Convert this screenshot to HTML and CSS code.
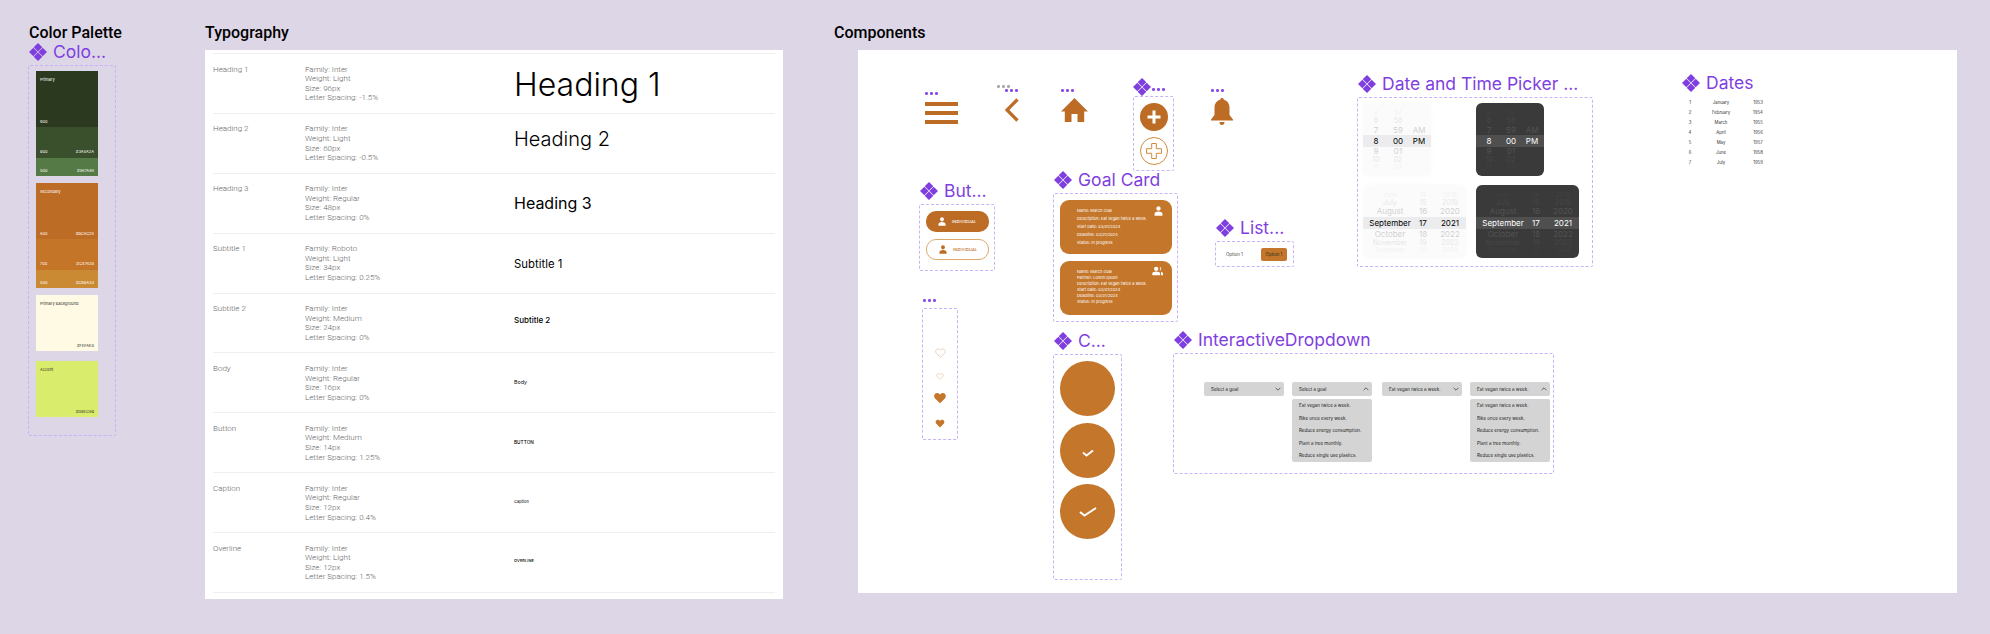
FILE: index.html
```html
<!DOCTYPE html>
<html lang="en">
<head>
<meta charset="utf-8">
<title>Design system</title>
<link rel="stylesheet" href="styles.css">
</head>
<body>
<svg class="defs" width="0" height="0" aria-hidden="true">
  <symbol id="diamond" viewBox="0 0 18 18">
    <path d="M9 0 13.300 4.300 9 8.600 4.700 4.300ZM4.300 4.700 8.600 9 4.300 13.300 0 9ZM13.700 4.700 18 9 13.700 13.300 9.400 9ZM9 9.400 13.300 13.700 9 18 4.700 13.700Z"/>
  </symbol>
  <symbol id="person" viewBox="0 0 12 14">
    <path d="M6 .5c1.700 0 3 1.300 3 3.100S7.700 6.800 6 6.800 3 5.400 3 3.600 4.300.5 6 .5ZM.5 13.500v-2.700c0-1.800 3.200-3 5.500-3s5.500 1.200 5.500 3v2.700Z"/>
  </symbol>
  <symbol id="people" viewBox="0 0 16 14">
    <path d="M5.500 1c1.700 0 3 1.300 3 3s-1.300 3-3 3-3-1.300-3-3 1.300-3 3-3ZM10 1.100c1.500.3 2.500 1.500 2.500 2.900S11.500 6.600 10 6.900c.9-.8 1.300-1.800 1.300-2.900S10.900 1.900 10 1.100ZM0 13v-2.500c0-1.700 3.200-2.700 5.500-2.700s5.500 1 5.500 2.700V13ZM12 8.200c1.700.4 3 1.200 3 2.300V13h-2.700v-2.500c0-.9-.1-1.600-.3-2.300Z"/>
  </symbol>
  <symbol id="heart" viewBox="0 0 24 22">
    <path d="M12 20.500 3 11.800C-.2 8.700 1.500 2 6.700 2 9 2 10.900 3.200 12 5.200 13.100 3.200 15 2 17.300 2c5.200 0 6.900 6.700 3.700 9.800Z"/>
  </symbol>
  <symbol id="chev-down" viewBox="0 0 10 6"><path d="M1 1 5 5 9 1" fill="none" stroke="#333" stroke-width="1.200"/></symbol>
  <symbol id="chev-up" viewBox="0 0 10 6"><path d="M1 5 5 1 9 5" fill="none" stroke="#333" stroke-width="1.200"/></symbol>
</svg>

<main class="board">
  <section class="palette">
    <h2 class="title title-palette">Color Palette</h2>
    <div class="label"><svg class="gem"><use href="#diamond"/></svg><span>Colo...</span></div>
    <div class="frame swatches">
      <div class="swatch-group">
        <div class="seg seg-tall c-900"><span>Primary</span><div class="seg-row"><span>900</span></div></div>
        <div class="seg seg-mid c-800"><div class="seg-row"><span>800</span><span>#3A5A2A</span></div></div>
        <div class="seg seg-low c-500"><div class="seg-row"><span>500</span><span>#567A46</span></div></div>
      </div>
      <div class="swatch-group">
        <div class="seg seg-tall c-s600"><span>Secondary</span><div class="seg-row"><span>600</span><span>#BC6C25</span></div></div>
        <div class="seg seg-mid c-s700"><div class="seg-row"><span>700</span><span>#C47628</span></div></div>
        <div class="seg seg-low c-s500"><div class="seg-row"><span>500</span><span>#C98A33</span></div></div>
      </div>
      <div class="seg seg-tall c-bg"><span>Primary Background</span><div class="seg-row seg-end"><span>#FEFAE0</span></div></div>
      <div class="seg seg-tall c-accent"><span>Accent</span><div class="seg-row seg-end"><span>#D9EC6B</span></div></div>
    </div>
  </section>

  <section class="typography">
    <h2 class="title">Typography</h2>
    <div class="type-panel">
      <div class="type-row"><div>Heading 1</div><div>Family: Inter<br>Weight: Light<br>Size: 96px<br>Letter Spacing: -1.5%</div><div class="sample s-h1">Heading 1</div></div>
      <div class="type-row"><div>Heading 2</div><div>Family: Inter<br>Weight: Light<br>Size: 60px<br>Letter Spacing: -0.5%</div><div class="sample s-h2">Heading 2</div></div>
      <div class="type-row"><div>Heading 3</div><div>Family: Inter<br>Weight: Regular<br>Size: 48px<br>Letter Spacing: 0%</div><div class="sample s-h3">Heading 3</div></div>
      <div class="type-row"><div>Subtitle 1</div><div>Family: Roboto<br>Weight: Light<br>Size: 34px<br>Letter Spacing: 0.25%</div><div class="sample s-s1">Subtitle 1</div></div>
      <div class="type-row"><div>Subtitle 2</div><div>Family: Inter<br>Weight: Medium<br>Size: 24px<br>Letter Spacing: 0%</div><div class="sample s-s2">Subtitle 2</div></div>
      <div class="type-row"><div>Body</div><div>Family: Inter<br>Weight: Regular<br>Size: 16px<br>Letter Spacing: 0%</div><div class="sample s-body">Body</div></div>
      <div class="type-row"><div>Button</div><div>Family: Inter<br>Weight: Medium<br>Size: 14px<br>Letter Spacing: 1.25%</div><div class="sample s-btn">BUTTON</div></div>
      <div class="type-row"><div>Caption</div><div>Family: Inter<br>Weight: Regular<br>Size: 12px<br>Letter Spacing: 0.4%</div><div class="sample s-cap">Caption</div></div>
      <div class="type-row"><div>Overline</div><div>Family: Inter<br>Weight: Light<br>Size: 12px<br>Letter Spacing: 1.5%</div><div class="sample s-over">OVERLINE</div></div>
    </div>
  </section>

  <section class="components">
    <h2 class="title">Components</h2>
    <div class="comp-panel">

      <div class="node n-menu">
        <div class="dots"><i></i><i></i><i></i></div>
        <div class="burger"><i></i><i></i><i></i></div>
      </div>

      <div class="dots dots-grey n-backdots"><i></i><i></i><i></i></div>
      <div class="node n-back">
        <div class="dots"><i></i><i></i><i></i></div>
        <svg class="ic-back" viewBox="0 0 14 24"><path d="M12.500 1.500 2 12l10.500 10.500" fill="none" stroke="#BC6C25" stroke-width="3.200"/></svg>
      </div>

      <div class="node n-home">
        <div class="dots"><i></i><i></i><i></i></div>
        <svg class="ic-home" viewBox="0 0 27 24"><path d="M13.500 0 27 13.500h-3.800V24H16.500v-8h-6v8H3.800V13.500H0Z" fill="#BC6C25"/></svg>
      </div>

      <div class="node n-add">
        <div class="add-head"><svg class="gem"><use href="#diamond"/></svg><div class="dots"><i></i><i></i><i></i></div></div>
        <div class="frame add-frame">
          <svg class="ic-add" viewBox="0 0 28 28"><circle cx="14" cy="14" r="14" fill="#BC6C25"/><path d="M14 7.500v13M7.500 14h13" stroke="#fff" stroke-width="3"/></svg>
          <svg class="ic-add" viewBox="0 0 28 28"><circle cx="14" cy="14" r="13.500" fill="#fff" stroke="#D08B3E"/><path d="M11.700 6.500h4.600v5.200h5.200v4.600h-5.200v5.200h-4.600v-5.200H6.500v-4.600h5.200Z" fill="#fff" stroke="#D08B3E"/></svg>
        </div>
      </div>

      <div class="node n-bell">
        <div class="dots"><i></i><i></i><i></i></div>
        <svg class="ic-bell" viewBox="0 0 22 27"><path d="M11 0c1 0 1.700.7 1.800 1.700C16.500 2.600 18.500 5.800 18.500 9.500v7.500L22 21.500v1H0v-1L3.500 17V9.500c0-3.700 2-6.900 5.700-7.800C9.300.7 10 0 11 0ZM8.500 24h5c0 1.800-1 3-2.500 3s-2.500-1.200-2.500-3Z" fill="#BC6C25"/></svg>
      </div>

      <div class="node n-buttons">
        <div class="label"><svg class="gem"><use href="#diamond"/></svg><span>But...</span></div>
        <div class="frame btn-frame">
          <div class="pill pill-solid"><svg class="ic-person"><use href="#person"/></svg><span>INDIVIDUAL</span></div>
          <div class="pill pill-line"><svg class="ic-person"><use href="#person"/></svg><span>INDIVIDUAL</span></div>
        </div>
      </div>

      <div class="node n-goal">
        <div class="label"><svg class="gem"><use href="#diamond"/></svg><span>Goal Card</span></div>
        <div class="frame goal-frame">
          <div class="card card-solo">
            <svg class="card-ic"><use href="#person"/></svg>
            <div>Name: March Goal</div>
            <div>Description: Eat vegan twice a week.</div>
            <div>Start Date: 03/01/2024</div>
            <div>Deadline: 03/31/2024</div>
            <div>Status: In progress</div>
          </div>
          <div class="card card-duo">
            <svg class="card-ic card-ic-wide"><use href="#people"/></svg>
            <div>Name: March Goal</div>
            <div>Partner: Lorem Ipsum</div>
            <div>Description: Eat vegan twice a week.</div>
            <div>Start Date: 03/01/2024</div>
            <div>Deadline: 03/31/2024</div>
            <div>Status: In progress</div>
          </div>
        </div>
      </div>

      <div class="node n-list">
        <div class="label"><svg class="gem"><use href="#diamond"/></svg><span>List...</span></div>
        <div class="frame list-frame">
          <span class="opt">Option 1</span>
          <span class="opt opt-on">Option 1</span>
        </div>
      </div>

      <div class="node n-picker">
        <div class="label"><svg class="gem"><use href="#diamond"/></svg><span>Date and Time Picker ...</span></div>
        <div class="frame picker-frame">
          <div class="wheel wheel-time wheel-light">
            <div class="w-row h7 f1"><span>6</span><span>57</span><span></span></div>
            <div class="w-row h8 f2"><span>6</span><span>58</span><span></span></div>
            <div class="w-row h10 f3"><span>7</span><span>59</span><span>AM</span></div>
            <div class="w-row h12 on"><span>8</span><span>00</span><span>PM</span></div>
            <div class="w-row h9 f3"><span>9</span><span>01</span><span></span></div>
            <div class="w-row h8 f2"><span>10</span><span>02</span><span></span></div>
            <div class="w-row h7 f1"><span>11</span><span>03</span><span></span></div>
          </div>
          <div class="wheel wheel-time wheel-dark">
            <div class="w-row h7 f1"><span>6</span><span>57</span><span></span></div>
            <div class="w-row h8 f2"><span>6</span><span>58</span><span></span></div>
            <div class="w-row h10 f3"><span>7</span><span>59</span><span>AM</span></div>
            <div class="w-row h12 on"><span>8</span><span>00</span><span>PM</span></div>
            <div class="w-row h9 f3"><span>9</span><span>01</span><span></span></div>
            <div class="w-row h8 f2"><span>10</span><span>02</span><span></span></div>
            <div class="w-row h7 f1"><span>11</span><span>03</span><span></span></div>
          </div>
          <div class="wheel wheel-date wheel-light">
            <div class="w-row h7 f1"><span>June</span><span>14</span><span>2018</span></div>
            <div class="w-row h7 f2"><span>July</span><span>15</span><span>2019</span></div>
            <div class="w-row h11 f3"><span>August</span><span>16</span><span>2020</span></div>
            <div class="w-row h12 on"><span>September</span><span>17</span><span>2021</span></div>
            <div class="w-row h10 f3"><span>October</span><span>18</span><span>2022</span></div>
            <div class="w-row h8 f2"><span>November</span><span>19</span><span>2023</span></div>
            <div class="w-row h5 f1"><span>December</span><span>20</span><span>2024</span></div>
          </div>
          <div class="wheel wheel-date wheel-dark">
            <div class="w-row h7 f1"><span>June</span><span>14</span><span>2018</span></div>
            <div class="w-row h7 f2"><span>July</span><span>15</span><span>2019</span></div>
            <div class="w-row h11 f3"><span>August</span><span>16</span><span>2020</span></div>
            <div class="w-row h12 on"><span>September</span><span>17</span><span>2021</span></div>
            <div class="w-row h10 f3"><span>October</span><span>18</span><span>2022</span></div>
            <div class="w-row h8 f2"><span>November</span><span>19</span><span>2023</span></div>
            <div class="w-row h5 f1"><span>December</span><span>20</span><span>2024</span></div>
          </div>
        </div>
      </div>

      <div class="node n-dates">
        <div class="label"><svg class="gem"><use href="#diamond"/></svg><span>Dates</span></div>
        <div class="date-table">
          <span>1</span><span>January</span><span>1953</span>
          <span>2</span><span>February</span><span>1954</span>
          <span>3</span><span>March</span><span>1955</span>
          <span>4</span><span>April</span><span>1956</span>
          <span>5</span><span>May</span><span>1957</span>
          <span>6</span><span>June</span><span>1958</span>
          <span>7</span><span>July</span><span>1959</span>
        </div>
      </div>

      <div class="node n-hearts">
        <div class="dots"><i></i><i></i><i></i></div>
        <div class="frame heart-frame">
          <svg class="hrt hrt-a"><use href="#heart"/></svg>
          <svg class="hrt hrt-b"><use href="#heart"/></svg>
          <svg class="hrt hrt-c"><use href="#heart"/></svg>
          <svg class="hrt hrt-d"><use href="#heart"/></svg>
        </div>
      </div>

      <div class="node n-check">
        <div class="label"><svg class="gem"><use href="#diamond"/></svg><span>C...</span></div>
        <div class="frame check-frame">
          <div class="disc"></div>
          <div class="disc"><svg class="tick tick-s" viewBox="0 0 12 8"><path d="M1 3.500 4.500 6.500 11 1.500" fill="none" stroke="#fff" stroke-width="2"/></svg></div>
          <div class="disc"><svg class="tick tick-l" viewBox="0 0 18 10"><path d="M1 5 5.500 8.500 17 1" fill="none" stroke="#fff" stroke-width="2"/></svg></div>
        </div>
      </div>

      <div class="node n-drop">
        <div class="label"><svg class="gem"><use href="#diamond"/></svg><span>InteractiveDropdown</span></div>
        <div class="frame drop-frame">
          <div class="drop-pair">
            <div class="drop"><div class="drop-head"><span>Select a goal</span><svg class="chev"><use href="#chev-down"/></svg></div></div>
            <div class="drop"><div class="drop-head"><span>Select a goal</span><svg class="chev"><use href="#chev-up"/></svg></div>
              <div class="drop-menu"><div>Eat vegan twice a week.</div><div>Bike once every week.</div><div>Reduce energy consumption.</div><div>Plant a tree monthly.</div><div>Reduce single use plastics.</div></div></div>
          </div>
          <div class="drop-pair">
            <div class="drop"><div class="drop-head"><span>Eat vegan twice a week.</span><svg class="chev"><use href="#chev-down"/></svg></div></div>
            <div class="drop"><div class="drop-head"><span>Eat vegan twice a week.</span><svg class="chev"><use href="#chev-up"/></svg></div>
              <div class="drop-menu"><div>Eat vegan twice a week.</div><div>Bike once every week.</div><div>Reduce energy consumption.</div><div>Plant a tree monthly.</div><div>Reduce single use plastics.</div></div></div>
          </div>
        </div>
      </div>

    </div>
  </section>
</main>
</body>
</html>
```

FILE: styles.css
```css
* { box-sizing: border-box; }
html, body { margin: 0; padding: 0; }
body {
  width: 1990px;
  height: 634px;
  overflow: hidden;
  background: #DDD6E7;
  font-family: Inter, "Liberation Sans", sans-serif;
  color: #000;
}
.defs { position: absolute; }
.board { display: flex; align-items: flex-start; padding: 23px 0 0 28px; }
.title {
  margin: 0;
  font: 500 16px/19px Roboto, sans-serif;
  color: #000;
}
.title-palette { padding-left: 1px; }

/* component label */
.label {
  display: flex;
  align-items: center;
  gap: 6px;
  height: 20px;
  margin-bottom: 3px;
  padding-left: 1px;
  font-size: 17.500px;
  line-height: 20px;
  color: #7F3FE0;
  white-space: nowrap;
}
.gem { width: 18px; height: 18px; fill: #7F3FE0; flex: none; }
.frame { border: 1px dashed #C9B2F5; border-radius: 2px; }
.dots { display: flex; gap: 2.500px; height: 3px; flex: none; }
.dots i { width: 2.500px; height: 2.500px; border-radius: 50%; background: #8B4BE8; }
.dots-grey i { background: #A9A9A9; }

/* palette */
.palette { width: 177px; flex: none; }
.swatches {
  width: 88px;
  height: 371px;
  padding: 5px 0 0 7px;
  display: flex;
  flex-direction: column;
  gap: 7px;
}
.swatch-group { display: flex; flex-direction: column; }
.seg {
  width: 62px;
  display: flex;
  flex-direction: column;
  justify-content: space-between;
  padding: 6px 4px 3px;
  font-size: 4px;
  line-height: 5px;
  color: #fff;
  flex: none;
}
.seg-tall { height: 56px; }
.seg-mid { height: 31px; justify-content: flex-end; padding-bottom: 4px; }
.seg-low { height: 18px; justify-content: flex-end; padding-bottom: 3px; }
.seg-row { display: flex; justify-content: space-between; }
.seg-end { justify-content: flex-end; }
.c-900 { background: #2B3A1F; }
.c-800 { background: #3A4F2B; }
.c-500 { background: #567A46; }
.c-s600 { background: #BC6C25; }
.c-s700 { background: #C47528; }
.c-s500 { background: #C98A33; }
.c-bg { background: #FEFAE3; color: #333; }
.c-accent { background: #D9EC6B; color: #333; margin-top: 3px; }

/* typography */
.typography { width: 578px; margin-right: 50px; flex: none; }
.type-panel {
  margin-top: 8px;
  height: 549px;
  background: #fff;
  padding: 3px 8px 0 8px;
}
.type-row {
  display: grid;
  grid-template-columns: 92px 209px 1fr;
  height: 59.900px;
  padding-top: 10.500px;
  border-top: 1px solid #EFEFEF;
  font: 300 8px/9.600px Roboto, sans-serif;
  color: #666;
}
.type-row:last-child { height: 61px; border-bottom: 1px solid #EFEFEF; }
.sample {
  font-family: Inter, sans-serif;
  color: #000;
  align-self: center;
  margin-top: -12px;
  white-space: nowrap;
  line-height: 1.2;
}
.s-h1 { font-size: 32px; font-weight: 300; margin-top: -7px; }
.s-h2 { font-size: 20px; font-weight: 300; margin-top: -20px; }
.s-h3 { font-size: 16px; font-weight: 400; margin-top: -10px; }
.s-s1 { font-size: 11.330px; font-weight: 400; letter-spacing: .0025em; margin-top: -7px; }
.s-s2 { font-size: 8px; font-weight: 500; margin-top: -14px; }
.s-body { font-size: 5.330px; font-weight: 400; }
.s-btn { font-size: 4.670px; font-weight: 500; letter-spacing: .0125em; margin-top: -10px; }
.s-cap { font-size: 4px; font-weight: 400; letter-spacing: .004em; }
.s-over { font-size: 4px; font-weight: 500; letter-spacing: .015em; }

/* components */
.components { width: 1124px; flex: none; }
.components .title { padding-left: 1px; }
.comp-panel {
  position: relative;
  margin: 8px 0 0 25px;
  width: 1099px;
  height: 543px;
  background: #fff;
}
.node { position: absolute; display: flex; flex-direction: column; }

.n-menu { left: 67px; top: 42px; width: 33px; gap: 6.500px; }
.burger { display: flex; flex-direction: column; gap: 5px; }
.burger i { height: 4px; background: #BC6C25; display: block; }

.n-backdots { position: absolute; left: 139px; top: 35px; }
.n-back { left: 147px; top: 39px; gap: 6px; }
.ic-back { width: 14px; height: 24px; display: block; }
.n-home { left: 203px; top: 39px; gap: 6px; }
.ic-home { width: 27px; height: 24px; display: block; }
.n-add { left: 275px; top: 25px; }
.add-head { display: flex; align-items: flex-end; gap: 1px; height: 21px; }
.add-head .dots { margin-bottom: 5px; }
.add-frame {
  width: 41px;
  height: 75px;
  display: flex;
  flex-direction: column;
  align-items: center;
  gap: 6px;
  padding-top: 6px;
}
.ic-add { width: 28px; height: 28px; display: block; flex: none; }
.n-bell { left: 353px; top: 39px; gap: 6px; }
.ic-bell { width: 22px; height: 27px; display: block; }

.n-buttons { left: 61px; top: 131px; }
.btn-frame {
  width: 76px;
  height: 67px;
  padding: 6px 0 0 6px;
  display: flex;
  flex-direction: column;
  gap: 7px;
}
.pill {
  width: 63px;
  height: 21px;
  border-radius: 10px;
  display: flex;
  align-items: center;
  gap: 6px;
  padding-left: 12px;
  font-size: 4px;
  letter-spacing: .04em;
  font-weight: 500;
}
.pill-solid { background: #BC6C25; color: #fff; fill: #fff; }
.pill-line { background: #fff; border: 1px solid #DDA96C; color: #BC6C25; fill: #BC6C25; }
.ic-person { width: 8px; height: 9px; flex: none; }

.n-goal { left: 195px; top: 120px; }
.goal-frame {
  width: 125px;
  height: 129px;
  padding: 6px 0 0 6px;
  display: flex;
  flex-direction: column;
  gap: 7px;
}
.card {
  position: relative;
  width: 112px;
  height: 54px;
  border-radius: 9px;
  background: #C4762B;
  color: #fff;
  padding-left: 17px;
  font-size: 3.900px;
  letter-spacing: .015em;
  white-space: nowrap;
}
.card-solo { padding-top: 7px; line-height: 8px; }
.card-duo { padding-top: 8px; line-height: 6.100px; }
.card-ic { position: absolute; right: 9px; top: 6px; width: 9px; height: 10px; fill: #fff; }
.card-ic-wide { width: 12px; right: 8px; top: 5px; }

.n-list { left: 357px; top: 168px; }
.list-frame {
  width: 79px;
  height: 26px;
  display: flex;
  align-items: center;
  justify-content: space-between;
  padding: 0 6px 0 10px;
}
.opt { font-size: 4.400px; color: #444; }
.opt-on {
  width: 26px;
  height: 13px;
  line-height: 13px;
  text-align: center;
  border-radius: 2px;
  background: #C4762B;
  color: #223016;
}

.n-picker { left: 499px; top: 24px; }
.picker-frame {
  width: 236px;
  height: 170px;
  padding: 5px 0 0 5px;
  display: grid;
  grid-template-columns: 103px 10px 103px;
  grid-template-rows: 73px 73px;
  row-gap: 9px;
}
.wheel {
  font-size: 8px;
  line-height: 1;
  border-radius: 6px;
  padding-top: 6.500px;
  color: #777;
}
.wheel-time { width: 68px; }
.wheel-light { background: #FBFBFB; box-shadow: 0 0 6px rgba(0, 0, 0, .02); }
.wheel-dark { background: #3A3A3A; color: #BBB; grid-column: 3; }
.w-row { display: grid; align-items: center; text-align: center; white-space: nowrap; }
.wheel-time .w-row { grid-template-columns: 26px 18px 24px; }
.wheel-date .w-row { grid-template-columns: 44px 22px 32px; padding-left: 5px; }
.h5 { height: 5px; } .h7 { height: 7px; } .h8 { height: 8px; } .h9 { height: 9px; }
.h10 { height: 10px; } .h11 { height: 11px; } .h12 { height: 12px; }
.f1 { opacity: .07; font-size: 6px; }
.f2 { opacity: .16; font-size: 7px; }
.f3 { opacity: .32; }
.wheel-dark .f1 { opacity: .05; }
.wheel-dark .f2 { opacity: .09; }
.wheel-dark .f3 { opacity: .18; }
.wheel-light .on { background: #ECECEE; color: #000; }
.wheel-dark .on { background: #4F4F4F; color: #fff; }

.n-dates { left: 822px; top: 23px; }
.n-dates .label { padding-left: 2px; }
.date-table {
  margin-top: 2px;
  display: grid;
  grid-template-columns: 20px 42px 32px;
  grid-auto-rows: 9.900px;
  align-items: center;
  text-align: center;
  font-size: 4.300px;
  color: #333;
}

.n-hearts { left: 64px; top: 249px; gap: 6px; }
.n-hearts .dots { margin-left: 1px; }
.heart-frame {
  width: 36px;
  height: 132px;
  display: flex;
  flex-direction: column;
  align-items: center;
}
.hrt { display: block; flex: none; }
.hrt-a { width: 11px; height: 10px; fill: #fff; stroke: #E3CFB8; stroke-width: 2px; margin-top: 39px; }
.hrt-b { width: 8px; height: 7px; fill: #fff; stroke: #E3CFB8; stroke-width: 2.500px; margin-top: 15px; }
.hrt-c { width: 14px; height: 12px; fill: #C4762B; margin-top: 12px; }
.hrt-d { width: 10px; height: 9px; fill: #C4762B; margin-top: 15px; }

.n-check { left: 195px; top: 281px; }
.check-frame {
  width: 69px;
  height: 226px;
  padding: 6px 0 0 6px;
  display: flex;
  flex-direction: column;
  gap: 6.500px;
}
.disc {
  width: 55px;
  height: 55px;
  border-radius: 50%;
  background: #C4762B;
  display: flex;
  align-items: center;
  justify-content: center;
  flex: none;
}
.tick-s { width: 12px; height: 8px; margin-top: 6px; }
.tick-l { width: 18px; height: 10px; margin-top: 1px; }

.n-drop { left: 315px; top: 280px; }
.drop-frame {
  width: 381px;
  height: 121px;
  padding: 28px 0 0 30px;
  display: flex;
  gap: 10px;
}
.drop-pair { display: flex; gap: 8px; }
.drop { width: 80px; display: flex; flex-direction: column; gap: 3px; }
.drop-head {
  height: 14px;
  border-radius: 2px;
  background: #D4D4D4;
  display: flex;
  align-items: center;
  justify-content: space-between;
  padding: 0 3px 0 7px;
  font-size: 4.500px;
  color: #222;
}
.chev { width: 6px; height: 4px; }
.drop-menu {
  height: 63px;
  border-radius: 2px;
  background: #D4D4D4;
  padding: 1px 0 0 7px;
  font-size: 4.500px;
  line-height: 12.500px;
  color: #222;
  white-space: nowrap;
}
```
